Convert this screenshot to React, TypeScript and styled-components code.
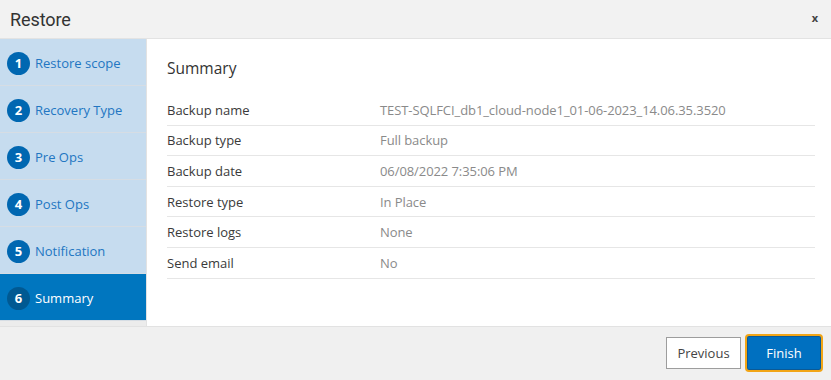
import React from "react";
import styled, { createGlobalStyle } from "styled-components";

const GlobalStyle = createGlobalStyle`
  html, body {
    margin: 0;
    padding: 0;
    background: #ffffff;
  }
  body {
    font-family: "Open Sans", "Liberation Sans", sans-serif;
  }
`;

// styled
const Dialog = styled.div`
  width: 831px;
  height: 380px;
  display: flex;
  flex-direction: column;
  background: #ffffff;
  overflow: hidden;
`;

const Header = styled.div`
  height: 39px;
  flex: 0 0 39px;
  box-sizing: border-box;
  display: flex;
  align-items: center;
  justify-content: space-between;
  padding: 0 13px 0 10px;
  background: #f2f2f2;
  border-bottom: 1px solid #e3e3e3;
`;

const Title = styled.h1`
  margin: 0;
  font-family: Roboto, "Open Sans", sans-serif;
  font-size: 18px;
  font-weight: 400;
  color: #333333;
  letter-spacing: -0.1px;
`;

const CloseButton = styled.button`
  border: none;
  background: transparent;
  padding: 0;
  font-family: "Open Sans", sans-serif;
  font-size: 11px;
  font-weight: 700;
  color: #444444;
  line-height: 1;
  margin-top: -3px;
`;

const Body = styled.div`
  flex: 1;
  display: flex;
  min-height: 0;
`;

const Sidebar = styled.nav`
  width: 146px;
  flex: 0 0 146px;
  display: flex;
  flex-direction: column;
  background: #ececec;
  border-right: 1px solid #e2e2e2;
`;

const Step = styled.div<{ $active?: boolean }>`
  height: 47px;
  flex: 0 0 47px;
  display: flex;
  align-items: center;
  gap: 5px;
  padding: 2px 0 0 7px;
  box-sizing: border-box;
  border-bottom: 1px solid #d6dde4;
  background: ${(p) => (p.$active ? "#0076bf" : "#c6dcef")};
  color: ${(p) => (p.$active ? "#ffffff" : "#2276c2")};
  font-size: 13px;
`;

const StepNumber = styled.span<{ $active?: boolean }>`
  width: 23px;
  height: 23px;
  border-radius: 50%;
  display: flex;
  align-items: center;
  justify-content: center;
  background: ${(p) => (p.$active ? "#005992" : "#0067b1")};
  color: #ffffff;
  font-size: 13px;
  font-weight: 700;
`;

const Content = styled.main`
  flex: 1;
  padding: 18px 16px 0 20px;
  background: #ffffff;
`;

const Heading = styled.h2`
  margin: 0 0 16px;
  font-size: 15.5px;
  line-height: 22px;
  font-weight: 400;
  color: #333333;
`;

const Row = styled.div`
  height: 30.6px;
  box-sizing: border-box;
  display: flex;
  align-items: center;
  border-bottom: 1px solid #e6e6e6;
  font-size: 13px;
`;

const Label = styled.span`
  width: 213px;
  flex: 0 0 213px;
  color: #3a3a3a;
`;

const Value = styled.span`
  color: #8a8a8a;
  letter-spacing: -0.08px;
`;

const Footer = styled.div`
  height: 54px;
  flex: 0 0 54px;
  box-sizing: border-box;
  display: flex;
  align-items: center;
  justify-content: flex-end;
  gap: 4px;
  padding: 0 8px 1px 0;
  background: #f0f0f0;
  border-top: 1px solid #e2e2e2;
`;

const SecondaryButton = styled.button`
  width: 75px;
  height: 32px;
  border: 1px solid #9d9d9d;
  background: #ffffff;
  color: #444444;
  font-family: "Open Sans", sans-serif;
  font-size: 13px;
  padding: 0;
`;

const PrimaryButton = styled.button`
  width: 78px;
  height: 38px;
  box-sizing: border-box;
  border: 2px solid #f2a516;
  border-radius: 4px;
  background: #0070c0;
  box-shadow: inset 0 0 0 1px #0a5a96;
  color: #ffffff;
  font-family: "Open Sans", sans-serif;
  font-size: 13px;
  padding: 0;
`;

const steps = [
  "Restore scope",
  "Recovery Type",
  "Pre Ops",
  "Post Ops",
  "Notification",
  "Summary",
];

const summary: [string, string][] = [
  ["Backup name", "TEST-SQLFCI_db1_cloud-node1_01-06-2023_14.06.35.3520"],
  ["Backup type", "Full backup"],
  ["Backup date", "06/08/2022 7:35:06 PM"],
  ["Restore type", "In Place"],
  ["Restore logs", "None"],
  ["Send email", "No"],
];

function App() {
  const current = 5;

  return (
    <>
      <GlobalStyle />
      <Dialog>
        <Header>
          <Title>Restore</Title>
          <CloseButton aria-label="Close">x</CloseButton>
        </Header>
        <Body>
          <Sidebar>
            {steps.map((name, i) => (
              <Step key={name} $active={i === current}>
                <StepNumber $active={i === current}>{i + 1}</StepNumber>
                {name}
              </Step>
            ))}
          </Sidebar>
          <Content>
            <Heading>Summary</Heading>
            {summary.map(([label, value]) => (
              <Row key={label}>
                <Label>{label}</Label>
                <Value>{value}</Value>
              </Row>
            ))}
          </Content>
        </Body>
        <Footer>
          <SecondaryButton>Previous</SecondaryButton>
          <PrimaryButton>Finish</PrimaryButton>
        </Footer>
      </Dialog>
    </>
  );
}

export default App;
